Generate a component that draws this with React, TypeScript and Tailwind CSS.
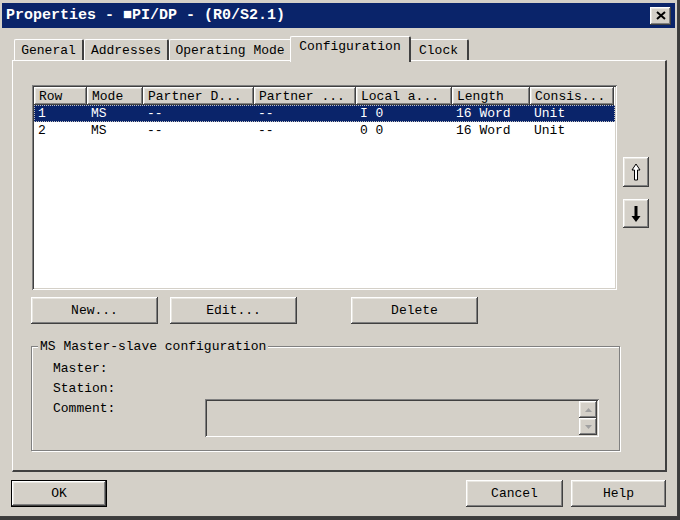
import React from 'react';

const raised =
  'bg-[#d4d0c8] shadow-[inset_-1px_-1px_0_#404040,inset_1px_1px_0_#ffffff,inset_-2px_-2px_0_#808080,inset_2px_2px_0_#e8e6e0]';
const sunken =
  'shadow-[inset_1px_1px_0_#808080,inset_-1px_-1px_0_#ffffff,inset_2px_2px_0_#404040,inset_-2px_-2px_0_#d4d0c8]';

const columns = [
  { label: 'Row', w: 'w-[53px]' },
  { label: 'Mode', w: 'w-[56px]' },
  { label: 'Partner D...', w: 'w-[111px]' },
  { label: 'Partner ...', w: 'w-[102px]' },
  { label: 'Local a...', w: 'w-[96px]' },
  { label: 'Length', w: 'w-[78px]' },
  { label: 'Consis...', w: 'w-[84px]' },
];

const rows = [
  ['1', 'MS', '--', '--', 'I 0', '16 Word', 'Unit'],
  ['2', 'MS', '--', '--', '0 0', '16 Word', 'Unit'],
];

function Tab({ label, w, active }: { label: string; w: string; active?: boolean }) {
  if (active) {
    return (
      <div
        className={`${w} h-[26px] -mx-[2px] z-10 bg-[#d4d0c8] border-l border-t border-white border-r-2 border-r-[#404040] rounded-t-[2px] flex items-start justify-center pt-[3px]`}
      >
        {label}
      </div>
    );
  }
  return (
    <div
      className={`${w} h-[22px] mt-[3px] bg-[#d4d0c8] border-l border-t border-white border-r-2 border-r-[#404040] rounded-t-[2px] flex items-center justify-center`}
    >
      {label}
    </div>
  );
}

function Button({ label, w, h = 'h-[27px]' }: { label: string; w: string; h?: string }) {
  return (
    <div className={`${w} ${h} ${raised} flex items-center justify-center`}>{label}</div>
  );
}

export default function App() {
  return (
    <div
      className="w-[680px] h-[520px] bg-[#3c3c3c] overflow-hidden text-[13px] text-black leading-none"
      style={{ fontFamily: '"Liberation Mono", "DejaVu Sans Mono", monospace' }}
    >
      <div className="w-[678px] h-[517px] bg-[#d4d0c8] border-r border-b border-[#404040] pt-[3px] px-[2px] flex flex-col">
        {/* title bar */}
        <div className="h-[25px] bg-[#0a246a] flex items-center pl-[4px] pr-[4px]">
          <span className="text-white font-bold text-[15px] tracking-[0px]">
            Properties - ■PI/DP - (R0/S2.1)
          </span>
          <div className={`ml-auto w-[21px] h-[18px] ${raised} flex items-center justify-center`}>
            <svg width="10" height="9" viewBox="0 0 10 9">
              <path d="M1 1 L9 8 M9 1 L1 8" stroke="#000" strokeWidth="2" />
            </svg>
          </div>
        </div>

        {/* tabs */}
        <div className="h-[32px] flex items-end pl-[12px]">
          <div className="flex items-start h-[24px]">
            <Tab label="General" w="w-[70px]" />
            <Tab label="Addresses" w="w-[85px]" />
            <Tab label="Operating Mode" w="w-[123px]" />
            <Tab label="Configuration" w="w-[121px]" active />
            <Tab label="Clock" w="w-[60px]" />
          </div>
        </div>

        {/* tab panel */}
        <div className="ml-[10px] w-[655px] h-[412px] border-l border-t border-white border-r-2 border-b-2 border-r-[#404040] border-b-[#404040] flex flex-col">
          <div className="flex mt-[24px] ml-[19px]">
            <div className={`w-[585px] h-[205px] bg-white ${sunken} p-[2px] flex flex-col`}>
              <div className="flex h-[18px]">
                {columns.map((c) => (
                  <div key={c.label} className={`${c.w} ${raised} flex items-center pl-[5px] whitespace-nowrap overflow-hidden`}>
                    {c.label}
                  </div>
                ))}
              </div>
              {rows.map((r, i) => (
                <div
                  key={i}
                  className={`flex h-[17px] items-center ${
                    i === 0 ? 'bg-[#0a246a] text-white outline-1 outline-dotted outline-[#c0c0c0] -outline-offset-1' : ''
                  }`}
                >
                  {r.map((cell, j) => (
                    <div key={j} className={`${columns[j].w} pl-[4px] whitespace-nowrap`}>
                      {cell}
                    </div>
                  ))}
                </div>
              ))}
            </div>
            <div className="ml-[6px] flex flex-col">
              <div className={`mt-[72px] w-[26px] h-[30px] ${raised} flex items-center justify-center`}>
                <svg width="10" height="18" viewBox="0 0 10 18">
                  <path d="M5 1 L9 7 L6.5 7 L6.5 17 L3.5 17 L3.5 7 L1 7 Z" fill="#ffffff" stroke="#000" strokeWidth="1" />
                </svg>
              </div>
              <div className={`mt-[12px] w-[26px] h-[29px] ${raised} flex items-center justify-center`}>
                <svg width="10" height="18" viewBox="0 0 10 18">
                  <path d="M3.5 1 L6.5 1 L6.5 11 L9.5 11 L5 17 L0.5 11 L3.5 11 Z" fill="#000" />
                </svg>
              </div>
            </div>
          </div>

          {/* action buttons */}
          <div className="flex mt-[7px] ml-[18px]">
            <Button label="New..." w="w-[127px]" />
            <div className="ml-[12px]">
              <Button label="Edit..." w="w-[127px]" />
            </div>
            <div className="ml-[54px]">
              <Button label="Delete" w="w-[127px]" />
            </div>
          </div>

          {/* group box */}
          <div className="relative mt-[22px] ml-[18px] w-[589px] h-[105px] border border-[#808080] shadow-[inset_1px_1px_0_#ffffff,1px_1px_0_#ffffff]">
            <div className="absolute -top-[7px] left-[6px] bg-[#d4d0c8] px-[2px]">MS Master-slave configuration</div>
            <div className="flex flex-col gap-[7px] pl-[21px] pt-[15px]">
              <div>Master:</div>
              <div>Station:</div>
              <div>Comment:</div>
            </div>
            <div className={`absolute left-[173px] top-[52px] w-[394px] h-[38px] bg-[#d4d0c8] ${sunken} p-[2px] flex justify-end`}>
              <div className="flex flex-col w-[18px]">
                <div className={`h-[17px] ${raised} flex items-center justify-center`}>
                  <svg width="7" height="4" viewBox="0 0 7 4">
                    <path d="M3.5 0 L7 4 L0 4 Z" fill="#a0a0a0" />
                  </svg>
                </div>
                <div className={`h-[17px] ${raised} flex items-center justify-center`}>
                  <svg width="7" height="4" viewBox="0 0 7 4">
                    <path d="M0 0 L7 0 L3.5 4 Z" fill="#a0a0a0" />
                  </svg>
                </div>
              </div>
            </div>
          </div>
        </div>

        {/* dialog buttons */}
        <div className="flex mt-[8px] ml-[9px]">
          <div className="w-[96px] h-[27px] border border-black">
            <Button label="OK" w="w-full" h="h-full" />
          </div>
          <div className="ml-auto flex gap-[8px] mr-[9px]">
            <Button label="Cancel" w="w-[97px]" />
            <Button label="Help" w="w-[95px]" />
          </div>
        </div>
      </div>
    </div>
  );
}
